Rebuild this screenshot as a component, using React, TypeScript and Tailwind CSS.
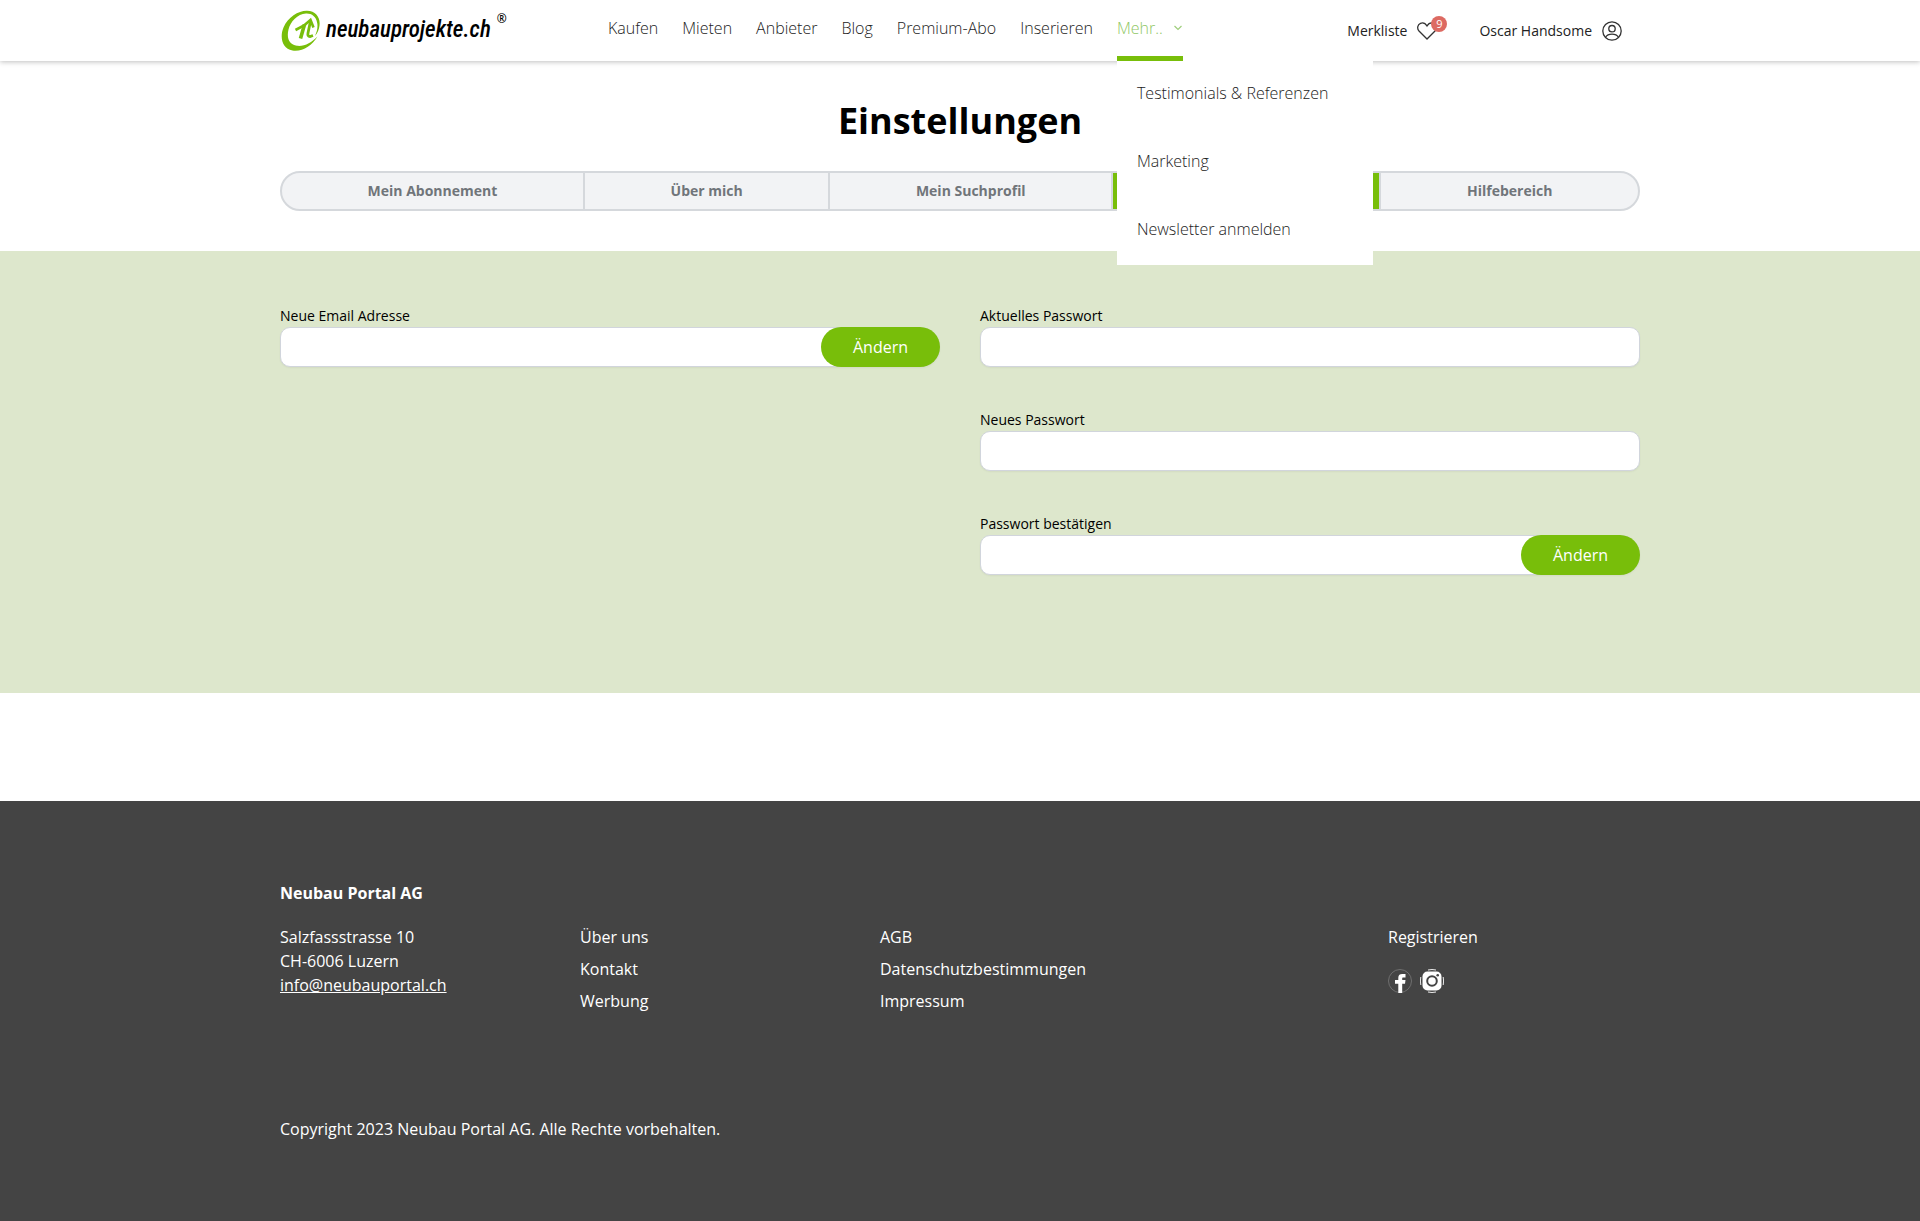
import React from 'react';

const navItems = ['Kaufen', 'Mieten', 'Anbieter', 'Blog', 'Premium-Abo', 'Inserieren'];
const moreItems = ['Testimonials & Referenzen', 'Marketing', 'Newsletter anmelden'];
const tabs = ['Mein Abonnement', 'Über mich', 'Mein Suchprofil', 'Einstellungen', 'Hilfebereich'];
const activeTab = 'Einstellungen';

const Logo = () => (
  <a href="#" className="flex w-[228px] shrink-0 items-center text-black">
    <svg viewBox="0 0 40 42" className="h-[42px] w-10 shrink-0" fill="none">
      {/* open swoosh ring */}
      <path
        d="M37.500 26.500 C32 36 22 42 12.500 40.500 C2 38.500 -0.500 27 3.500 17.500 C8 7 18.500 0.500 27 0.700 C36 1 40.500 7.500 39.500 15.500 C39 19.500 37.500 23 35 26 C37 21.500 38 17.500 37.200 13 C36.200 6.500 31.500 3.300 26 3.600 C17.500 4.200 10.500 11.500 8.500 19.500 C6.300 28.500 9.500 34.800 17 35.800 C24.500 36.700 31.500 32.500 37.500 26.500 Z"
        fill="#78be0a"
      />
      {/* house shaped n */}
      <path d="M15.500 20 L24 15.500 L30.500 10 L33.500 17.500" stroke="#78be0a" strokeWidth="2.600" />
      <path d="M24.500 14.500 L20.500 28.500" stroke="#78be0a" strokeWidth="3.600" />
      <path d="M30.500 11 L28 23 Q27.300 26.500 30 26.500 L33 25.500" stroke="#78be0a" strokeWidth="2.800" />
    </svg>
    <span className="ml-1.5 whitespace-nowrap font-['Roboto_Condensed','Liberation_Sans',sans-serif] text-[23px] font-medium italic">
      neubauprojekte.ch
    </span>
    <span className="mb-6 ml-1.5 text-xs font-semibold">®</span>
  </a>
);

const HeartIcon = () => (
  <svg viewBox="0 0 20 18" className="h-[18px] w-5" fill="none" stroke="#333" strokeWidth="1.300">
    <path d="M10 17 L2 9 C-0.300 6.500 0.600 2.500 3.500 1.300 C6 0.400 8.500 1.500 10 4 C11.500 1.500 14 0.400 16.500 1.300 C19.400 2.500 20.300 6.500 18 9 Z" />
  </svg>
);

const UserIcon = () => (
  <svg viewBox="0 0 20 20" className="size-5" fill="none" stroke="#333" strokeWidth="1.300">
    <circle cx="10" cy="10" r="9.200" />
    <circle cx="10" cy="7.700" r="3.200" />
    <path d="M3.600 16.300 C5 13.800 7 13.200 10 13.200 C13 13.200 15 13.800 16.400 16.300" />
  </svg>
);

const FacebookIcon = () => (
  <svg viewBox="0 0 24 24" className="size-6">
    <circle cx="12" cy="12" r="11.500" fill="none" stroke="#7a7a7a" strokeWidth="0.800" />
    <path
      d="M10.300 24 V14.800 H7 V11 H10.300 V8.700 C10.300 5.800 12 5 14.200 5 H17.500 V8.500 H15.500 C14.300 8.500 14.200 9 14.200 9.800 V11 H17.500 L17 14.800 H14.200 V24 Z"
      fill="#fff"
    />
  </svg>
);

const InstagramIcon = () => (
  <svg viewBox="0 0 24 24" className="size-6">
    <path
      d="M8 1 Q12 0 16 1 M8 23 Q12 24 16 23 M0.800 8 Q0 12 0.800 16 M23.200 8 Q24 12 23.200 16"
      fill="none"
      stroke="#fff"
      strokeWidth="0.900"
    />
    <rect x="2.500" y="2.500" width="19" height="19" rx="5" fill="#fff" />
    <circle cx="12" cy="12" r="4.800" fill="none" stroke="#444" strokeWidth="2" />
    <circle cx="17.700" cy="6.300" r="1.300" fill="#444" />
  </svg>
);

const Header = () => (
  <header className="relative z-10 bg-white shadow-[0_1px_5px_rgba(0,0,0,0.25)]">
    <div className="mx-auto flex h-[61px] max-w-[1360px]">
      <Logo />
      <nav className="ml-[100px] flex gap-6 font-light text-[#222]">
        {navItems.map((item) => (
          <a key={item} href="#" className="flex items-center pb-[5px]">
            {item}
          </a>
        ))}
        <div className="relative flex">
          <button type="button" className="flex items-center border-b-5 border-[#78be0a] text-[#8fc765]">
            Mehr..
            <svg viewBox="0 0 10 6" className="ml-2.5 h-1.5 w-2.5" fill="none" stroke="#9fce7c" strokeWidth="1.200">
              <path d="M1.500 1 L5 4.500 L8.500 1" />
            </svg>
          </button>
          <div className="absolute left-0 top-full flex w-64 flex-col bg-white">
            {moreItems.map((item) => (
              <a key={item} href="#" className="px-5 pb-6 pt-5">
                {item}
              </a>
            ))}
          </div>
        </div>
      </nav>
      <div className="ml-auto mr-[18px] flex items-center gap-8 text-sm text-[#222]">
        <a href="#" className="flex items-center gap-2.5">
          Merkliste
          <span className="relative pr-2.5">
            <HeartIcon />
            <span className="absolute -top-1.5 right-0 flex size-4 items-center justify-center rounded-full bg-[#dd6a62] text-[11px] leading-4 text-white">
              9
            </span>
          </span>
        </a>
        <a href="#" className="flex items-center gap-2.5">
          Oscar Handsome
          <UserIcon />
        </a>
      </div>
    </div>
  </header>
);

interface FieldProps {
  id: string;
  label: string;
  type: string;
  withButton?: boolean;
}

const Field: React.FC<FieldProps> = ({ id, label, type, withButton }) => (
  <div>
    <label htmlFor={id} className="block pb-px text-sm text-black">
      {label}
    </label>
    <div className="relative">
      <input
        id={id}
        type={type}
        className={`block h-10 w-full border border-gray-300 bg-white px-3 shadow-xs ${withButton ? 'rounded-l-[10px] rounded-r-[20px]' : 'rounded-[10px]'}`}
      />
      {withButton && (
        <button type="submit" className="absolute right-0 top-0 h-10 w-[119px] rounded-full bg-[#78be0a] text-white">
          Ändern
        </button>
      )}
    </div>
  </div>
);

const FooterLinks: React.FC<{ items: string[] }> = ({ items }) => (
  <div className="flex flex-col items-start gap-2">
    {items.map((item) => (
      <a key={item} href="#">
        {item}
      </a>
    ))}
  </div>
);

const Footer = () => (
  <footer className="bg-[#444] py-20 text-white">
    <div className="mx-auto max-w-[1360px]">
      <h2 className="font-bold">Neubau Portal AG</h2>
      <div className="mt-5 grid grid-cols-[300px_300px_1fr_252px]">
        <address className="not-italic">
          Salzfassstrasse 10
          <br />
          CH-6006 Luzern
          <br />
          <a href="#" className="underline">
            info@neubauportal.ch
          </a>
        </address>
        <FooterLinks items={['Über uns', 'Kontakt', 'Werbung']} />
        <FooterLinks items={['AGB', 'Datenschutzbestimmungen', 'Impressum']} />
        <div>
          <a href="#">Registrieren</a>
          <div className="mt-5 flex gap-2">
            <a href="#" aria-label="Facebook">
              <FacebookIcon />
            </a>
            <a href="#" aria-label="Instagram">
              <InstagramIcon />
            </a>
          </div>
        </div>
      </div>
      <p className="mt-26">Copyright 2023 Neubau Portal AG. Alle Rechte vorbehalten.</p>
    </div>
  </footer>
);

const App = () => (
  <div className="bg-white font-['Open_Sans',sans-serif] text-base">
    <Header />
    <main className="pb-27">
      <div className="mx-auto max-w-[1360px] pb-10 pt-10">
        <h1 className="text-center text-4xl font-bold text-black">Einstellungen</h1>
        <div className="mt-[30px] flex h-10 overflow-hidden rounded-full border-2 border-[#d5d8dc] bg-[#f2f3f5] text-sm font-bold text-[#70757a]">
          {tabs.map((tab) => (
            <button
              key={tab}
              type="button"
              className={`flex-auto border-r-2 border-[#d5d8dc] last:border-r-0 ${tab === activeTab ? 'bg-[#78be0a] text-white' : ''}`}
            >
              {tab}
            </button>
          ))}
        </div>
      </div>
      <section className="bg-[#dde7cc] pb-[118px] pt-[55px]">
        <div className="mx-auto grid max-w-[1360px] grid-cols-2 gap-10">
          <form>
            <Field id="email" label="Neue Email Adresse" type="email" withButton />
          </form>
          <form className="flex flex-col gap-[43px]">
            <Field id="current-password" label="Aktuelles Passwort" type="password" />
            <Field id="new-password" label="Neues Passwort" type="password" />
            <Field id="confirm-password" label="Passwort bestätigen" type="password" withButton />
          </form>
        </div>
      </section>
    </main>
    <Footer />
  </div>
);

export default App;
